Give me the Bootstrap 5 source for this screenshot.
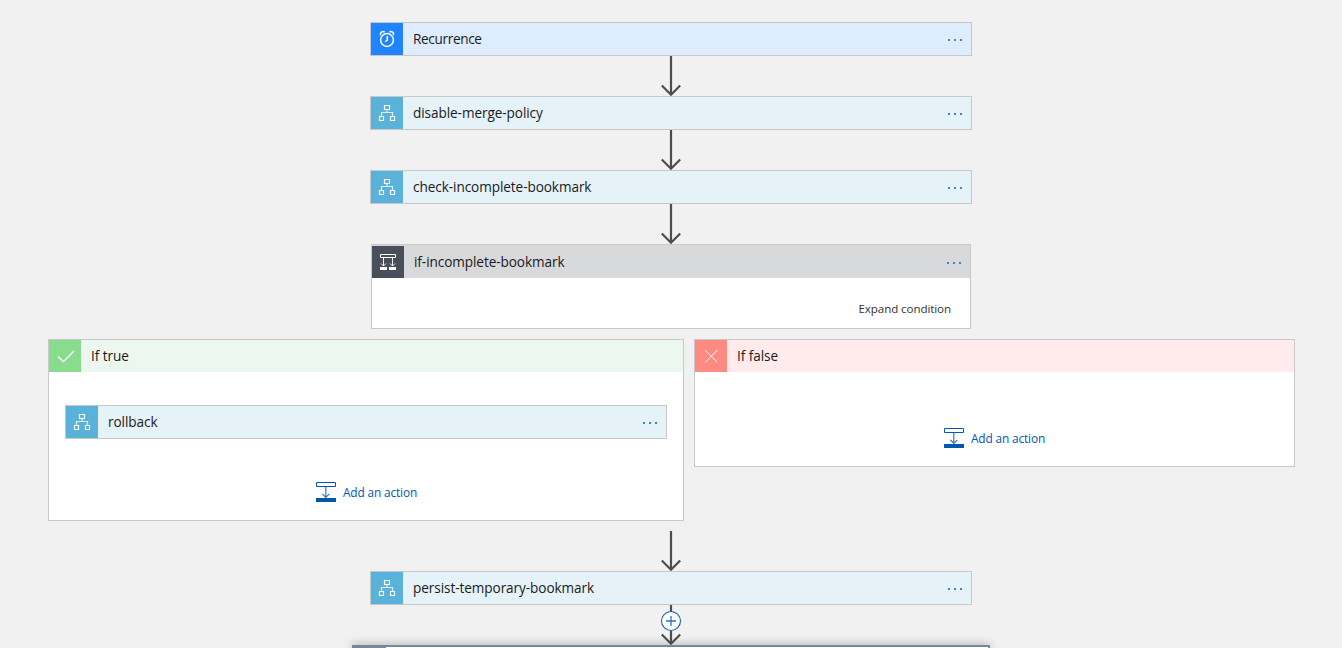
<!DOCTYPE html>
<html lang="en">
<head>
<meta charset="utf-8">
<meta name="viewport" content="width=device-width, initial-scale=1">
<title>Workflow designer</title>
<link href="https://cdn.jsdelivr.net/npm/bootstrap@5.3.0/dist/css/bootstrap.min.css" rel="stylesheet">
<style>
  body { background: #f1f1f1; color: #1b1b1b; font-family: "Open Sans", "Noto Sans", sans-serif; font-size: 13.6px; line-height: 20px; height: 648px; }
  svg { display: block; flex: none; }
  .designer { height: 648px; padding-top: 22px; }
  .designer > * { flex: none; }
  .step { width: 602px; height: 34px; border: 1px solid #c8c8c8; background: #e5f2f8; flex: none; }
  .step.trigger { background: #deecff; }
  .tile { width: 32px; height: 32px; background: #59b2da; color: #fff; flex: none; }
  .trigger .tile { background: #1e84ff; }
  .step-name { padding-left: 10px; white-space: nowrap; letter-spacing: -.08px; }
  .trigger .step-name { letter-spacing: -.35px; }
  .dots { gap: 4px; margin-right: 9px; padding-top: 2px; }
  .dots i { width: 2px; height: 2px; background: #4484c6; }
  .condition { width: 600px; height: 85px; border: 1px solid #c8c8c8; background: #fff; }
  .condition-head { height: 33px; background: #d8d9da; padding-top: 1px; }
  .condition .tile { background: #484f5a; }
  .expand { font-size: 11.6px; letter-spacing: -.1px; color: #333; padding: 21px 19px 0 0; }
  .branches { width: 1247px; gap: 10px; margin: 10px 0 10px 1px; }
  .branch { border: 1px solid #c8c8c8; background: #fff; }
  .branch-true { width: 636px; height: 182px; }
  .branch-false { width: 601px; height: 128px; }
  .branch-head { height: 32px; background: #ecf7ef; }
  .branch-false .branch-head { background: #ffebeb; }
  .branch-head .tile { background: #89dc8d; }
  .branch-false .tile { background: #ff8a82; }
  .branch .step { margin-top: 33px; }
  .add-action { color: #0058ad; font-size: 11.9px; letter-spacing: -.15px; gap: 7px; line-height: 22px; }
  .branch-true .add-action { margin-top: 42px; padding-left: 1px; }
  .branch-false .add-action { margin-top: 55px; }
  .insert { top: 5px; left: 50%; margin-left: -11px; }
  .next-step { width: 638px; height: 3px; border: 2px solid #76879a; border-bottom: 0; background: #fff; box-shadow: 0 0 9px rgba(0,0,0,.5); }
  .next-tile { width: 32px; background: #76879a; }
</style>
</head>
<body class="overflow-hidden">
<svg width="0" height="0" class="position-absolute" aria-hidden="true">
  <symbol id="clock" viewBox="0 0 32 32">
    <g fill="none" stroke="#fff" stroke-width="1.5">
      <circle cx="16" cy="17" r="6.4"/>
      <path d="M16.300 13v4.200l-2.200 1.400M9.600 12.200a2.600 2.600 0 0 1 4-3M22.400 12.200a2.600 2.600 0 0 0-4-3"/>
    </g>
  </symbol>
  <symbol id="flow" viewBox="0 0 32 32">
    <g fill="none" stroke="#fff">
      <path d="M13.500 8.500h5v4h-5zM8.500 19.500h4v4h-4zM19.500 19.500h4v4h-4z" stroke-width="1.200"/>
      <path d="M16 13v2.500M10.500 19v-3.500h11V19" stroke-width="1.200" opacity=".8"/>
    </g>
  </symbol>
  <symbol id="fork" viewBox="0 0 32 32">
    <g fill="none" stroke="#fff">
      <path d="M8.500 8.500h15v3h-15z"/>
      <path d="M11.500 12v8M20.500 12v8M9 17.500l2.500 2.500 2.500-2.500M18 17.500l2.500 2.500 2.500-2.500" stroke-width=".9"/>
    </g>
    <path d="M8 21h7v3H8zM17 21h7v3h-7z" fill="#fff"/>
  </symbol>
  <symbol id="arrow" viewBox="0 0 22 41">
    <path d="M11 0v38.500M1.800 29.500L11 38.700l9.200-9.200" fill="none" stroke="#4d4d4d" stroke-width="2.200"/>
  </symbol>
  <symbol id="add" viewBox="0 0 20 20">
    <path d="M.5.5h19v4H.5z" fill="none" stroke="#0058ad"/>
    <path d="M0 16h20v4H0z" fill="#0058ad"/>
    <path d="M9.800 5v10.500M6.300 11.800l3.500 3.500 3.500-3.500" fill="none" stroke="#2f77bd" stroke-width="1.200"/>
  </symbol>
</svg>

<main class="designer d-flex flex-column align-items-center overflow-hidden">
  <div class="step trigger d-flex align-items-center">
    <span class="tile"><svg width="32" height="32"><use href="#clock"/></svg></span>
    <span class="step-name">Recurrence</span>
    <span class="dots d-flex ms-auto"><i></i><i></i><i></i></span>
  </div>
  <svg width="22" height="40" viewBox="0 0 22 40"><use href="#arrow" width="22" height="41"/></svg>
  <div class="step d-flex align-items-center">
    <span class="tile"><svg width="32" height="32"><use href="#flow"/></svg></span>
    <span class="step-name">disable-merge-policy</span>
    <span class="dots d-flex ms-auto"><i></i><i></i><i></i></span>
  </div>
  <svg width="22" height="40" viewBox="0 0 22 40"><use href="#arrow" width="22" height="41"/></svg>
  <div class="step d-flex align-items-center">
    <span class="tile"><svg width="32" height="32"><use href="#flow"/></svg></span>
    <span class="step-name">check-incomplete-bookmark</span>
    <span class="dots d-flex ms-auto"><i></i><i></i><i></i></span>
  </div>
  <svg width="22" height="40" viewBox="0 0 22 40"><use href="#arrow" width="22" height="41"/></svg>

  <section class="condition">
    <div class="condition-head d-flex align-items-center">
      <span class="tile"><svg width="32" height="32"><use href="#fork"/></svg></span>
      <span class="step-name">if-incomplete-bookmark</span>
      <span class="dots d-flex ms-auto"><i></i><i></i><i></i></span>
    </div>
    <div class="expand text-end">Expand condition</div>
  </section>

  <div class="branches d-flex align-items-start">
    <section class="branch branch-true d-flex flex-column align-items-center">
      <div class="branch-head d-flex align-items-center w-100">
        <span class="tile"><svg width="32" height="32" viewBox="0 0 32 32"><path d="M9 16.500l5.500 5.200L25 11" fill="none" stroke="#fff" stroke-width="1.300"/></svg></span>
        <span class="step-name">If true</span>
      </div>
      <div class="step d-flex align-items-center">
        <span class="tile"><svg width="32" height="32"><use href="#flow"/></svg></span>
        <span class="step-name">rollback</span>
        <span class="dots d-flex ms-auto"><i></i><i></i><i></i></span>
      </div>
      <div class="add-action d-flex align-items-center"><svg width="20" height="20"><use href="#add"/></svg><span>Add an action</span></div>
    </section>
    <section class="branch branch-false d-flex flex-column align-items-center">
      <div class="branch-head d-flex align-items-center w-100">
        <span class="tile"><svg width="32" height="32" viewBox="0 0 32 32"><path d="M10 10l12.500 12.500M22.500 10L10 22.500" fill="none" stroke="#fff" stroke-width="1"/></svg></span>
        <span class="step-name">If false</span>
      </div>
      <div class="add-action d-flex align-items-center"><svg width="20" height="20"><use href="#add"/></svg><span>Add an action</span></div>
    </section>
  </div>

  <svg width="22" height="40" viewBox="0 0 22 40"><use href="#arrow" width="22" height="41"/></svg>
  <div class="step d-flex align-items-center">
    <span class="tile"><svg width="32" height="32"><use href="#flow"/></svg></span>
    <span class="step-name">persist-temporary-bookmark</span>
    <span class="dots d-flex ms-auto"><i></i><i></i><i></i></span>
  </div>
  <div class="position-relative z-1">
    <svg width="22" height="40" viewBox="0 0 22 40"><use href="#arrow" width="22" height="41"/></svg>
    <svg class="insert position-absolute" width="22" height="22" viewBox="0 0 22 22"><circle cx="11" cy="11" r="9.500" fill="#fff" stroke="#1762b5" stroke-width="1.100"/><path d="M11 6v10M6 11h10" stroke="#2c73c0" stroke-width="1.300"/></svg>
  </div>
  <section class="next-step d-flex"><span class="next-tile"></span></section>
</main>
<script src="https://cdn.jsdelivr.net/npm/bootstrap@5.3.0/dist/js/bootstrap.bundle.min.js"></script>
</body>
</html>
